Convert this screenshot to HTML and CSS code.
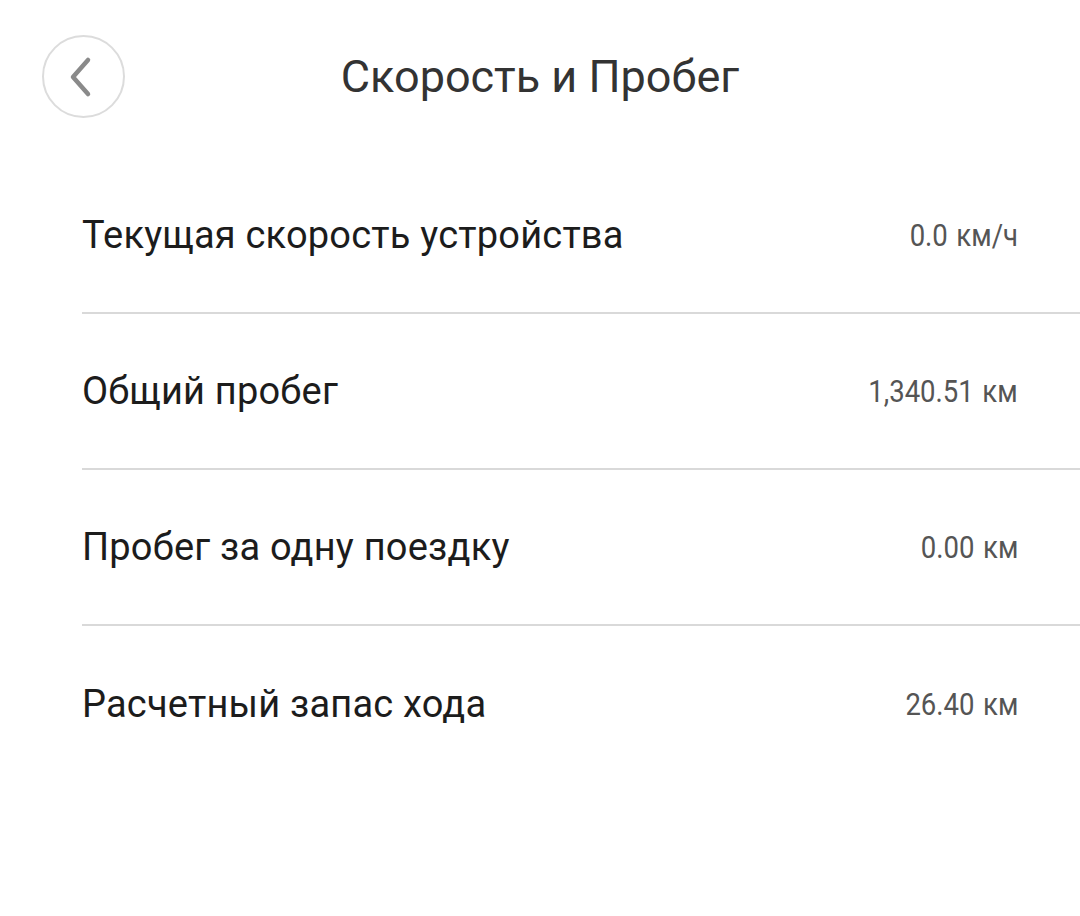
FILE: index.html
```html
<!DOCTYPE html>
<html lang="ru">
<head>
    <meta charset="UTF-8">
    <title>Скорость и Пробег</title>
    <link rel="stylesheet" href="styles.css">
</head>
<body>
<div class="page">
    <div class="header">
        <a class="back" href="#">
            <svg width="30" height="42" viewBox="0 0 30 42">
                <path d="M22 4 L7 21 L22 38" fill="none" stroke="#8a8a8a" stroke-width="4.5" stroke-linecap="round" stroke-linejoin="round"/>
            </svg>
        </a>
        <h1 class="title">Скорость и Пробег</h1>
    </div>

    <ul class="list">
        <li class="row">
            <span class="label">Текущая скорость устройства</span>
            <span class="value">0.0 км/ч</span>
        </li>
        <li class="row">
            <span class="label">Общий пробег</span>
            <span class="value">1,340.51 км</span>
        </li>
        <li class="row">
            <span class="label">Пробег за одну поездку</span>
            <span class="value">0.00 км</span>
        </li>
        <li class="row">
            <span class="label">Расчетный запас хода</span>
            <span class="value">26.40 км</span>
        </li>
    </ul>
</div>
</body>
</html>
```

FILE: styles.css
```css
* {
    margin: 0;
    padding: 0;
    box-sizing: border-box;
}
body {
    background: #fff;
    font-family: Roboto, "Noto Sans", sans-serif;
}
.page {
    width: 1080px;
    height: 916px;
}
.header {
    height: 158px;
    padding-top: 35px;
    position: relative;
    display: flex;
    justify-content: center;
}
.back {
    position: absolute;
    left: 42px;
    top: 35px;
    width: 83px;
    height: 83px;
    border: 2px solid #dcdcdc;
    border-radius: 50%;
    display: flex;
    align-items: center;
    justify-content: center;
}
.back svg {
    margin-right: 6px;
}
.title {
    font-weight: 400;
    font-size: 45px;
    line-height: 83px;
    color: #333;
}
.list {
    list-style: none;
    padding-left: 82px;
}
.row {
    height: 156px;
    display: flex;
    align-items: center;
    justify-content: space-between;
    padding-right: 62px;
    border-bottom: 2px solid #d9d9d9;
}
.row:last-child {
    border-bottom: none;
}
.label {
    font-size: 38px;
    letter-spacing: 0.2px;
    color: #1c1c1c;
}
.value {
    font-size: 32px;
    color: #555;
    word-spacing: 2px;
    transform: scaleX(0.86);
    transform-origin: right center;
}
```
